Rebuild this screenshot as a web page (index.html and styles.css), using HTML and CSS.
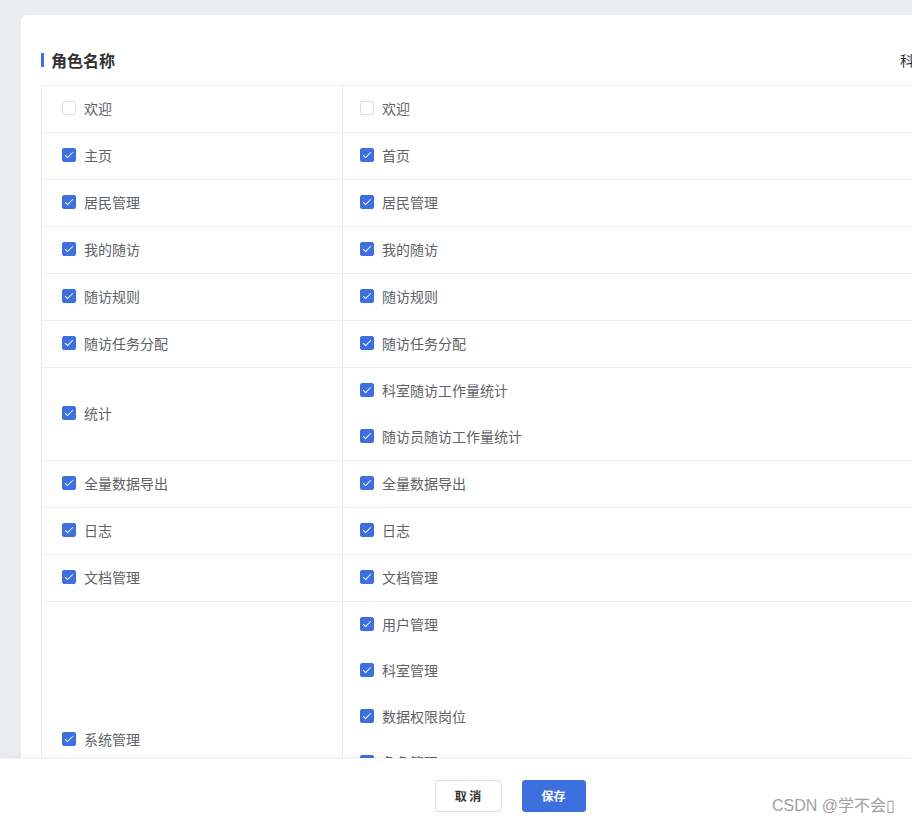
FILE: index.html
```html
<!DOCTYPE html>
<html lang="zh">
<head>
<meta charset="utf-8">
<link rel="stylesheet" href="styles.css">
</head>
<body>
<div class="app">
  <main class="main">
    <section class="card">
      <header class="card-head">
        <h2 class="title">角色名称</h2>
        <span class="head-right">科室名称</span>
      </header>
      <div class="table">
        <div class="row">
          <div class="cell left"><label class="item"><span class="cb"></span><span>欢迎</span></label></div>
          <div class="cell right"><label class="item"><span class="cb"></span><span>欢迎</span></label></div>
        </div>
        <div class="row">
          <div class="cell left"><label class="item"><span class="cb on"></span><span>主页</span></label></div>
          <div class="cell right"><label class="item"><span class="cb on"></span><span>首页</span></label></div>
        </div>
        <div class="row">
          <div class="cell left"><label class="item"><span class="cb on"></span><span>居民管理</span></label></div>
          <div class="cell right"><label class="item"><span class="cb on"></span><span>居民管理</span></label></div>
        </div>
        <div class="row">
          <div class="cell left"><label class="item"><span class="cb on"></span><span>我的随访</span></label></div>
          <div class="cell right"><label class="item"><span class="cb on"></span><span>我的随访</span></label></div>
        </div>
        <div class="row">
          <div class="cell left"><label class="item"><span class="cb on"></span><span>随访规则</span></label></div>
          <div class="cell right"><label class="item"><span class="cb on"></span><span>随访规则</span></label></div>
        </div>
        <div class="row">
          <div class="cell left"><label class="item"><span class="cb on"></span><span>随访任务分配</span></label></div>
          <div class="cell right"><label class="item"><span class="cb on"></span><span>随访任务分配</span></label></div>
        </div>
        <div class="row">
          <div class="cell left"><label class="item"><span class="cb on"></span><span>统计</span></label></div>
          <div class="cell right">
            <label class="item"><span class="cb on"></span><span>科室随访工作量统计</span></label>
            <label class="item"><span class="cb on"></span><span>随访员随访工作量统计</span></label>
          </div>
        </div>
        <div class="row">
          <div class="cell left"><label class="item"><span class="cb on"></span><span>全量数据导出</span></label></div>
          <div class="cell right"><label class="item"><span class="cb on"></span><span>全量数据导出</span></label></div>
        </div>
        <div class="row">
          <div class="cell left"><label class="item"><span class="cb on"></span><span>日志</span></label></div>
          <div class="cell right"><label class="item"><span class="cb on"></span><span>日志</span></label></div>
        </div>
        <div class="row">
          <div class="cell left"><label class="item"><span class="cb on"></span><span>文档管理</span></label></div>
          <div class="cell right"><label class="item"><span class="cb on"></span><span>文档管理</span></label></div>
        </div>
        <div class="row">
          <div class="cell left"><label class="item"><span class="cb on"></span><span>系统管理</span></label></div>
          <div class="cell right">
            <label class="item"><span class="cb on"></span><span>用户管理</span></label>
            <label class="item"><span class="cb on"></span><span>科室管理</span></label>
            <label class="item"><span class="cb on"></span><span>数据权限岗位</span></label>
            <label class="item"><span class="cb on"></span><span>角色管理</span></label>
            <label class="item"><span class="cb on"></span><span>菜单管理</span></label>
            <label class="item"><span class="cb on"></span><span>字典管理</span></label>
          </div>
        </div>
      </div>
    </section>
  </main>
  <footer class="footer">
    <button class="btn btn-plain">取 消</button>
    <button class="btn btn-primary">保存</button>
    <span class="watermark">CSDN @学不会▯</span>
  </footer>
</div>
</body>
</html>
```
FILE: styles.css
```css
* { box-sizing: border-box; }
html, body { margin: 0; padding: 0; }
body {
  width: 912px;
  height: 822px;
  overflow: hidden;
  font-family: "Noto Sans CJK SC", "Noto Sans", "Liberation Sans", sans-serif;
  background: #ecedf1;
}
.app {
  display: flex;
  flex-direction: column;
  height: 822px;
}
.main {
  flex: 1;
  overflow: hidden;
  padding: 15px 0 0 21px;
  background: #ecedf1;
}
.card {
  width: 1200px;
  background: #fff;
  border-radius: 6px;
  padding: 34px 20px 0 20px;
}
.card-head {
  display: grid;
  grid-template-columns: 859px auto;
  align-items: center;
  height: 22px;
  margin-bottom: 14px;
}
.title {
  margin: 0;
  font-size: 16px;
  font-weight: 700;
  color: #303133;
  line-height: 22px;
  border-left: 3px solid #3d6fde;
  padding-left: 7px;
  height: 14px;
  display: flex;
  align-items: center;
}
.head-right {
  font-size: 14px;
  color: #303133;
  line-height: 22px;
  white-space: nowrap;
}
.table {
  border-left: 1px solid #ebeef5;
  border-top: 1px solid #ebeef5;
}
.row {
  display: grid;
  grid-template-columns: 301px 1fr;
  border-bottom: 1px solid #ebeef5;
}
.cell {
  display: flex;
  flex-direction: column;
  justify-content: center;
}
.cell.left {
  border-right: 1px solid #ebeef5;
  padding-left: 20px;
}
.cell.right {
  padding-left: 17px;
}
.item {
  display: flex;
  align-items: center;
  height: 46px;
  padding-bottom: 2px;
  font-size: 14px;
  color: #606266;
  gap: 8px;
}
.cb {
  width: 14px;
  height: 14px;
  border: 1px solid #dcdfe6;
  border-radius: 2px;
  background: #fff;
  position: relative;
  flex: none;
}
.cb.on {
  background: #3d6fde;
  border-color: #3d6fde;
}
.cb.on::after {
  content: "";
  position: absolute;
  left: 4px;
  top: 1px;
  width: 3px;
  height: 7px;
  border: 1px solid #fff;
  border-left: 0;
  border-top: 0;
  transform: rotate(45deg);
}
.footer {
  flex: none;
  height: 64px;
  background: #fff;
  box-shadow: 0 -2px 6px rgba(0, 0, 0, 0.04);
  border-top: 1px solid #f2f3f5;
  display: flex;
  align-items: center;
  justify-content: center;
  gap: 20px;
  position: relative;
  padding-top: 11px;
  padding-left: 108px;
}
.btn {
  height: 32px;
  border-radius: 3px;
  font-family: inherit;
  font-size: 12px;
  font-weight: 700;
  cursor: pointer;
  padding: 0 0 2px;
}
.btn-plain {
  width: 67px;
  background: #fff;
  border: 1px solid #dcdfe6;
  color: #333;
}
.btn-primary {
  width: 64px;
  background: #3d6fde;
  border: 1px solid #3d6fde;
  color: #fff;
}
.watermark {
  position: absolute;
  left: 772px;
  top: 33px;
  font-family: "Liberation Sans", "Noto Sans CJK SC", sans-serif;
  font-size: 16px;
  color: #a0a0a0;
  white-space: nowrap;
}
```
